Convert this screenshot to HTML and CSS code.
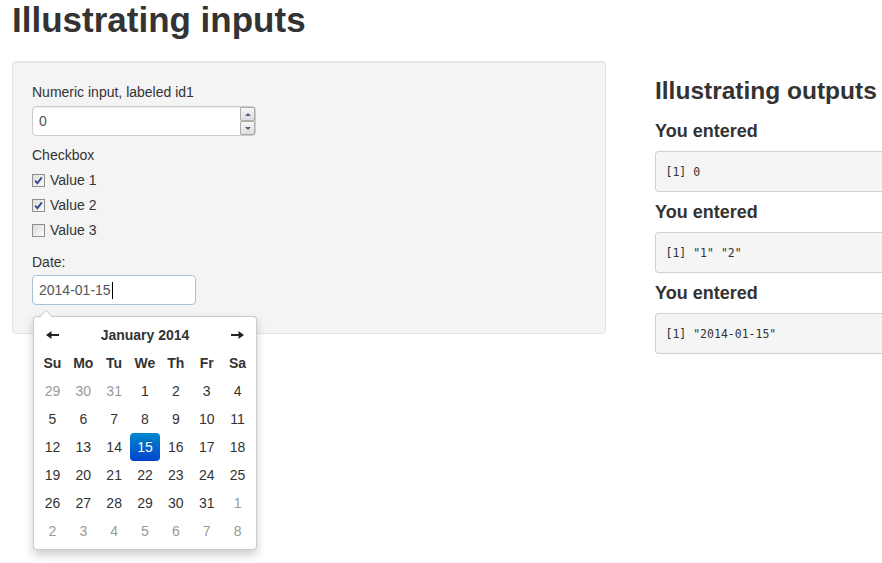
FILE: index.html
```html
<!DOCTYPE html>
<html>
<head>
<meta charset="utf-8">
<title>Illustrating inputs</title>
<link rel="stylesheet" href="styles.css">
</head>
<body>
<div class="page">
  <h1 class="title">Illustrating inputs</h1>
  <div class="row">
    <div class="sidebar">
      <div class="well">
        <label class="ctl-label">Numeric input, labeled id1</label>
        <div class="num-input">
          <span class="num-text">0</span>
          <span class="spin">
            <span class="spin-btn"><span class="tri-up"></span></span>
            <span class="spin-btn"><span class="tri-down"></span></span>
          </span>
        </div>
        <label class="ctl-label cb-group-label">Checkbox</label>
        <div class="cb-row"><span class="cb"><svg width="11" height="11" viewBox="0 0 11 11"><path d="M2.2 5.6 L4.4 8.2 L8.8 2.4" fill="none" stroke="#33478a" stroke-width="1.8"/></svg></span>Value 1</div>
        <div class="cb-row"><span class="cb"><svg width="11" height="11" viewBox="0 0 11 11"><path d="M2.2 5.6 L4.4 8.2 L8.8 2.4" fill="none" stroke="#33478a" stroke-width="1.8"/></svg></span>Value 2</div>
        <div class="cb-row"><span class="cb"></span>Value 3</div>
        <label class="ctl-label date-label">Date:</label>
        <div class="date-field">
          <div class="date-input">2014-01-15<span class="caret"></span></div>
          <div class="datepicker">
            <div class="dp-grid">
              <div class="dp-cell dp-nav"><svg width="13" height="8" viewBox="0 0 13 8"><path d="M0 4 L5.5 0 L5.5 3 L13 3 L13 5 L5.5 5 L5.5 8 Z" fill="#222"/></svg></div>
              <div class="dp-cell dp-title">January 2014</div>
              <div class="dp-cell dp-nav"><svg width="13" height="8" viewBox="0 0 13 8"><path d="M13 4 L7.5 0 L7.5 3 L0 3 L0 5 L7.5 5 L7.5 8 Z" fill="#222"/></svg></div>

              <div class="dp-cell dp-dow">Su</div><div class="dp-cell dp-dow">Mo</div><div class="dp-cell dp-dow">Tu</div><div class="dp-cell dp-dow">We</div><div class="dp-cell dp-dow">Th</div><div class="dp-cell dp-dow">Fr</div><div class="dp-cell dp-dow">Sa</div>

              <div class="dp-cell old">29</div><div class="dp-cell old">30</div><div class="dp-cell old">31</div><div class="dp-cell">1</div><div class="dp-cell">2</div><div class="dp-cell">3</div><div class="dp-cell">4</div>
              <div class="dp-cell">5</div><div class="dp-cell">6</div><div class="dp-cell">7</div><div class="dp-cell">8</div><div class="dp-cell">9</div><div class="dp-cell">10</div><div class="dp-cell">11</div>
              <div class="dp-cell">12</div><div class="dp-cell">13</div><div class="dp-cell">14</div><div class="dp-cell active">15</div><div class="dp-cell">16</div><div class="dp-cell">17</div><div class="dp-cell">18</div>
              <div class="dp-cell">19</div><div class="dp-cell">20</div><div class="dp-cell">21</div><div class="dp-cell">22</div><div class="dp-cell">23</div><div class="dp-cell">24</div><div class="dp-cell">25</div>
              <div class="dp-cell">26</div><div class="dp-cell">27</div><div class="dp-cell">28</div><div class="dp-cell">29</div><div class="dp-cell">30</div><div class="dp-cell">31</div><div class="dp-cell new">1</div>
              <div class="dp-cell new">2</div><div class="dp-cell new">3</div><div class="dp-cell new">4</div><div class="dp-cell new">5</div><div class="dp-cell new">6</div><div class="dp-cell new">7</div><div class="dp-cell new">8</div>
            </div>
          </div>
        </div>
      </div>
    </div>
    <div class="main">
      <h3 class="out-title">Illustrating outputs</h3>
      <h4 class="out-head">You entered</h4>
      <pre class="out-pre">[1] 0</pre>
      <h4 class="out-head">You entered</h4>
      <pre class="out-pre">[1] "1" "2"</pre>
      <h4 class="out-head">You entered</h4>
      <pre class="out-pre">[1] "2014-01-15"</pre>
    </div>
  </div>
</div>
</body>
</html>
```
FILE: styles.css
```css
html, body {
  margin: 0;
  padding: 0;
  background: #fff;
}
body {
  font-family: "Liberation Sans", Arial, sans-serif;
  font-size: 14px;
  line-height: 20px;
  color: #333;
}
.page {
  padding-left: 12px;
  width: 870px;
  min-height: 563px;
  overflow-x: clip;
}
.title {
  font-size: 35px;
  line-height: 40px;
  font-weight: bold;
  margin: 0 0 21px;
  color: #333;
}
.row {
  display: flex;
  align-items: flex-start;
  gap: 49px;
}
.sidebar {
  width: 594px;
  flex: none;
}
.well {
  background: #f4f4f4;
  border: 1px solid #e3e3e3;
  border-radius: 4px;
  padding: 20px 19px 19px;
  box-shadow: inset 0 1px 1px rgba(0, 0, 0, 0.05);
}
.ctl-label {
  display: block;
  margin-bottom: 4px;
}
.num-input {
  display: flex;
  width: 224px;
  height: 30px;
  box-sizing: border-box;
  border: 1px solid #ccc;
  border-radius: 4px;
  background: #fff;
  box-shadow: inset 0 1px 1px rgba(0, 0, 0, 0.075);
  margin-bottom: 9px;
}
.num-text {
  flex: 1;
  padding: 4px 6px;
  line-height: 20px;
  color: #555;
}
.spin {
  display: flex;
  flex-direction: column;
  width: 15px;
}
.spin-btn {
  flex: 1;
  display: flex;
  align-items: center;
  justify-content: center;
  border: 1px solid #acacac;
  border-radius: 1px;
  background: linear-gradient(#f6f6f6, #dedede);
}
.tri-up {
  width: 0;
  height: 0;
  border-left: 3px solid transparent;
  border-right: 3px solid transparent;
  border-bottom: 3px solid #4d5f88;
}
.tri-down {
  width: 0;
  height: 0;
  border-left: 3px solid transparent;
  border-right: 3px solid transparent;
  border-top: 3px solid #4d5f88;
}
.cb-group-label {
  margin-bottom: 5px;
}
.cb-row {
  display: flex;
  align-items: center;
  height: 20px;
  margin-bottom: 5px;
}
.cb {
  width: 13px;
  height: 13px;
  box-sizing: border-box;
  border: 1px solid #8e8f8f;
  background: linear-gradient(135deg, #dcdcdc, #fbfbfb);
  margin-right: 5px;
  display: flex;
  align-items: center;
  justify-content: center;
}
.date-label {
  margin-top: 12px;
  margin-bottom: 3px;
}
.date-field {
  position: relative;
  margin-bottom: 9px;
}
.date-input {
  width: 164px;
  height: 30px;
  box-sizing: border-box;
  border: 1px solid #a9c0d8;
  border-radius: 4px;
  background: #fff;
  padding: 4px 6px;
  line-height: 20px;
  color: #555;
  display: flex;
  align-items: center;
}
.caret {
  display: inline-block;
  width: 1px;
  height: 17px;
  background: #000;
  margin-left: 1px;
}
.datepicker {
  position: absolute;
  top: 41px;
  left: 1px;
  width: 224px;
  box-sizing: border-box;
  padding: 4px 3px;
  background: #fff;
  border: 1px solid rgba(0, 0, 0, 0.2);
  border-radius: 4px;
  box-shadow: 0 5px 10px rgba(0, 0, 0, 0.2);
  z-index: 10;
}
.datepicker::before {
  content: "";
  position: absolute;
  top: -7px;
  left: 5px;
  border-left: 7px solid transparent;
  border-right: 7px solid transparent;
  border-bottom: 7px solid rgba(0, 0, 0, 0.2);
}
.datepicker::after {
  content: "";
  position: absolute;
  top: -6px;
  left: 6px;
  border-left: 6px solid transparent;
  border-right: 6px solid transparent;
  border-bottom: 6px solid #fff;
}
.dp-grid {
  display: grid;
  grid-template-columns: repeat(7, 1fr);
}
.dp-cell {
  height: 28px;
  display: flex;
  align-items: center;
  justify-content: center;
  color: #333;
}
.dp-title {
  grid-column: span 5;
  font-weight: bold;
}
.dp-dow {
  font-weight: bold;
}
.dp-cell.old,
.dp-cell.new {
  color: #999;
}
.dp-cell.active {
  color: #fff;
  border-radius: 4px;
  background: linear-gradient(#0088cc, #0044cc);
  text-shadow: 0 -1px 0 rgba(0, 0, 0, 0.25);
}
.main {
  width: 420px;
  flex: none;
}
.out-title {
  font-size: 24.5px;
  line-height: 40px;
  font-weight: bold;
  margin: 10px 0 10px;
}
.out-head {
  font-size: 18px;
  line-height: 20px;
  font-weight: bold;
  margin: 10px 0;
}
.out-title + .out-head {
  margin-top: 0;
}
.out-pre {
  margin: 0 0 10px;
  padding: 9.5px;
  font-family: "DejaVu Sans Mono", "Liberation Mono", monospace;
  font-size: 11.5px;
  line-height: 20px;
  color: #333;
  background: #f5f5f5;
  border: 1px solid rgba(0, 0, 0, 0.15);
  border-radius: 4px;
  white-space: pre;
}
```
